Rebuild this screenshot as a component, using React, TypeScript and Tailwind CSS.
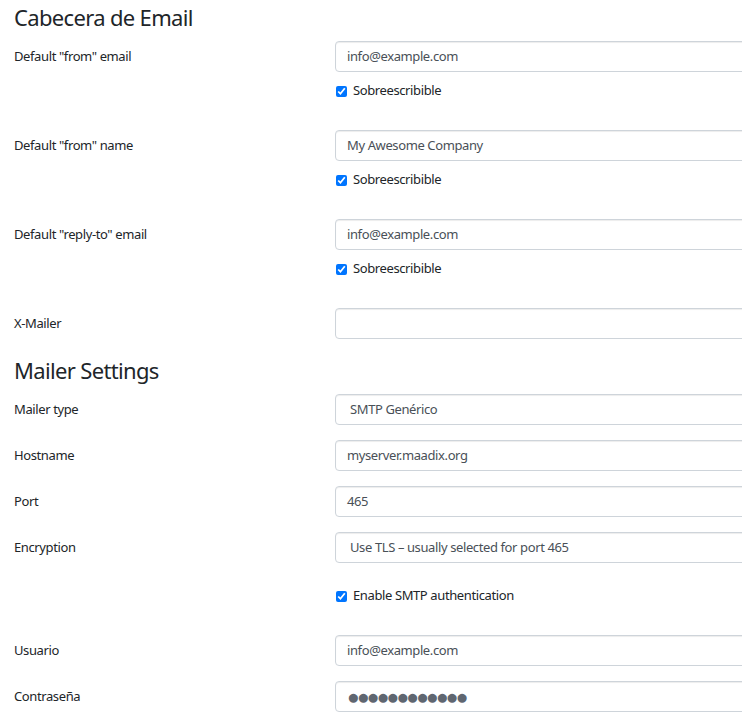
import React from "react";

const font = { fontFamily: '"Noto Sans", "Open Sans", sans-serif' };

function Field({ value, select }: { value: string; select?: boolean }) {
  return (
    <div
      className={`h-[31px] w-[480px] shrink-0 rounded-[4px] border border-[#ced4da] bg-white shadow-[inset_0_1px_1px_rgba(0,0,0,0.075)] flex items-center text-[13px] tracking-[-0.03em] text-[#495057] ${
        select ? "pl-[14px]" : "pl-[11px]"
      }`}
    >
      {value}
    </div>
  );
}

function Check({ label }: { label: string }) {
  return (
    <label className="flex items-center h-[20px] text-[13px] tracking-[-0.03em] text-[#212529]">
      <input type="checkbox" defaultChecked className="m-0 w-[11px] h-[11px] ml-[1px] mr-[6px]" />
      {label}
    </label>
  );
}

function Row({
  label,
  value,
  select,
  check,
  mb,
}: {
  label: string;
  value: string;
  select?: boolean;
  check?: boolean;
  mb: string;
}) {
  return (
    <div className={`flex ${mb}`}>
      <div className="w-[321px] shrink-0 h-[31px] flex items-center text-[13px] tracking-[-0.03em] text-[#212529]">
        {label}
      </div>
      <div className="flex flex-col">
        <Field value={value} select={select} />
        {check && (
          <div className="mt-[9px]">
            <Check label="Sobreescribible" />
          </div>
        )}
      </div>
    </div>
  );
}

export default function App() {
  return (
    <div style={font} className="w-[742px] h-[722px] overflow-hidden bg-white pl-[14px]">
      <h2 className="mt-[3px] h-[28px] mb-[10px] flex items-center text-[22px] tracking-[-0.03em] font-normal text-[#212529]">
        Cabecera de Email
      </h2>
      <Row label={'Default "from" email'} value="info@example.com" check mb="mb-[29px]" />
      <Row label={'Default "from" name'} value="My Awesome Company" check mb="mb-[29px]" />
      <Row label={'Default "reply-to" email'} value="info@example.com" check mb="mb-[29px]" />
      <Row label="X-Mailer" value="" mb="mb-[17px]" />
      <h2 className="h-[28px] mb-[10px] flex items-center text-[22px] tracking-[-0.03em] font-normal text-[#212529]">
        Mailer Settings
      </h2>
      <Row label="Mailer type" value="SMTP Genérico" select mb="mb-[15px]" />
      <Row label="Hostname" value="myserver.maadix.org" mb="mb-[15px]" />
      <Row label="Port" value="465" mb="mb-[15px]" />
      <Row label="Encryption" value="Use TLS – usually selected for port 465" select mb="mb-[23px]" />
      <div className="flex mb-[29px]">
        <div className="w-[321px] shrink-0" />
        <Check label="Enable SMTP authentication" />
      </div>
      <Row label="Usuario" value="info@example.com" mb="mb-[15px]" />
      <div className="flex">
        <div className="w-[321px] shrink-0 h-[31px] flex items-center text-[13px] tracking-[-0.03em] text-[#212529]">
          Contraseña
        </div>
        <div className="h-[31px] w-[480px] shrink-0 rounded-[4px] border border-[#ced4da] bg-white shadow-[inset_0_1px_1px_rgba(0,0,0,0.075)] flex items-center pl-[11px] text-[#5f6670]">
          <span className="text-[21px] leading-none tracking-[-2.8px]">●●●●●●●●●●●●</span>
        </div>
      </div>
    </div>
  );
}
